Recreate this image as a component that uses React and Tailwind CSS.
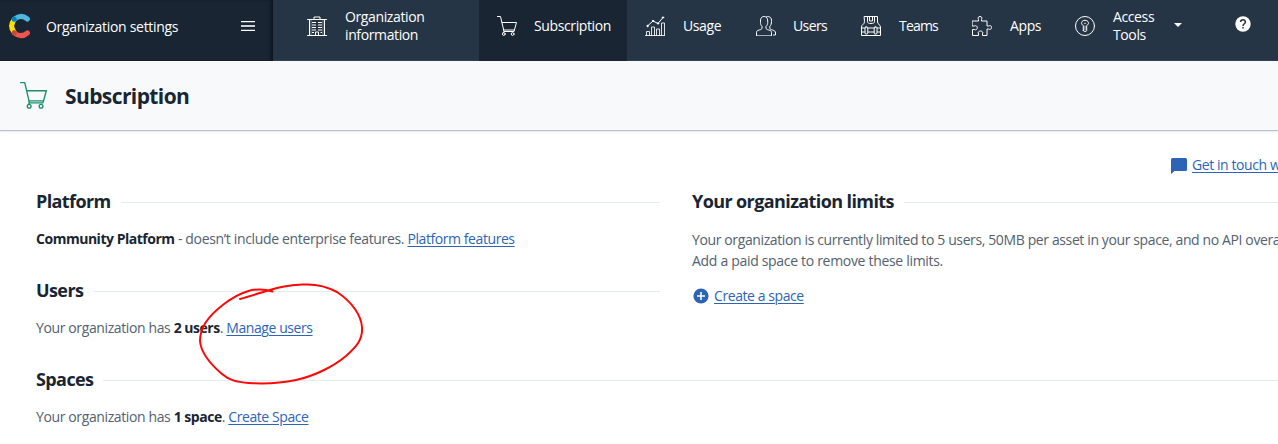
import React from "react";

function Icon({ className = "", size = 20, children }) {
  return (
    <svg
      width={size}
      height={size}
      viewBox="0 0 20 20"
      fill="none"
      stroke="currentColor"
      strokeWidth="1"
      strokeLinecap="round"
      strokeLinejoin="round"
      className={"shrink-0 " + className}
    >
      {children}
    </svg>
  );
}

const building = (
  <>
    <path d="M.5 3.5h19M.5 19.5h19M2.5 3.5v16M17.5 3.5v16M7 3V1h6v2M8.5 19v-3h3v3" />
    <path d="M4 4v15M16 4v15" opacity=".35" />
    <path d="M5 6.500h4M5 9h4M5 11.500h4M5 14h4M5 16.500h2M11 6.500h4M11 9h4M11 11.500h4M11 14h4M13.500 16.500h1.500" strokeLinecap="butt" />
  </>
);

const cart = (
  <>
    <path d="M.5.5h3L7 15.500h10L19.500 6.500H4.900M6.400 14h10.500" />
    <circle cx="6.800" cy="18" r="1.400" />
    <circle cx="15.600" cy="18" r="1.400" />
    <path d="M7 15.500l-.8 1.200" />
  </>
);

const chart = (
  <>
    <path d="M.5 19.500h19M1.500 19.500v-4h3v4M6.500 19.500v-8.500h3v8.500M11.500 19.500v-6.500h3v6.500M16.500 19.500V7h3v12.500" opacity=".85" />
    <path d="M2.500 10l5.500-5 5 2.500 5-6" />
    <g fill="currentColor">
      <circle cx="2.500" cy="10" r=".7" />
      <circle cx="8" cy="5" r=".7" />
      <circle cx="13" cy="7.500" r=".7" />
      <circle cx="18" cy="1.500" r=".7" />
    </g>
  </>
);

const people = (
  <>
    <path d="M.5 19.500v-3c0-1.700 1-2 2.800-2.500 1.700-.5 2.700-.8 2.700-2v-1.500C5 9.500 4.500 8 4.500 6.500 4.200 2.500 5.500.5 8 .5s4 2 3.700 6c0 1.500-.5 3-1.700 4v1.500c0 1.200 1 1.500 2.700 2 1.800.5 2.800.8 2.800 2.500v3z" />
    <path d="M10.500.8c3-1 5.300.7 5 4.700 0 2-.5 3.800-1.700 5v1.500c0 1.200 1 1.500 2.700 2 2 .7 3 1.200 3 3v2h-2" />
  </>
);

const vest = (
  <>
    <path d="M3.500.5h3v5c0 1.500 1 2 3.500 2s3.500-.5 3.500-2v-5h3v5.500c0 2.500 3 2.500 3 5v8.500H.5V11c0-2.500 3-2.500 3-5zM6.500.5h7M8.500 1v4h3V1" />
    <path d="M.5 12h3M7 12h6M16.500 12h3M.5 16h3M7 16h6M16.500 16h3" strokeWidth="1.500" opacity=".65" />
    <rect x="4" y="11" width="2.800" height="7" rx="1" />
    <rect x="13.200" y="11" width="2.800" height="7" rx="1" />
  </>
);

const puzzle = (
  <path d="M.5 5h6V3.500C5.500 1.500 6.500.5 8 .5s2.500 1 1.500 3V5h5.500v5h1.500c2-1 3 0 3 1.500s-1 2.500-3 1.500H15v6.500h-4.500V18c1-2-.5-3-2-3s-3 1-2 3v1.500h-6v-6h1.800c2 1 3-.5 3-1.800s-1-2.700-3-1.700H.5z" />
);

const keyhole = (
  <>
    <circle cx="10" cy="10" r="9.500" />
    <path d="M8.300 14.500V9.500C6.800 8.700 6.300 7.600 6.600 6.500 7 5 8.400 4.300 10 4.300s3 .7 3.400 2.200c.3 1.100-.2 2.200-1.700 3v5c0 1.500-3.400 1.500-3.400 0z" />
    <path d="M10 10v4M9.300 7.300h1.400" opacity=".7" />
  </>
);

function NavItem({ icon, className = "", textClass = "", children }) {
  return (
    <div className={"flex shrink-0 h-[61px] items-center pb-[9px] pl-[18px] gap-[18px] " + className}>
      <Icon>{icon}</Icon>
      <span className={"whitespace-nowrap leading-[18px] " + textClass}>{children}</span>
    </div>
  );
}

function Logo() {
  return (
    <svg width="22" height="26" viewBox="0 0 22 26" fill="none" strokeWidth="5" strokeLinecap="round" className="shrink-0">
      <path d="M5.300 6.500Q-.1 13 5.300 19.500" stroke="#ffe000" />
      <path d="M5.300 19.800Q12 25.500 18.400 20" stroke="#f0544f" />
      <path d="M5.300 6.200Q12 .5 18.400 6" stroke="#4fb5e1" />
      <circle cx="5.300" cy="6.300" r="2.500" fill="#0681b6" />
      <circle cx="5.300" cy="19.700" r="2.500" fill="#cd4739" />
    </svg>
  );
}

function Heading({ children, className = "" }) {
  return (
    <div className="flex h-[24px] items-center">
      <h2 className={"shrink-0 whitespace-nowrap pb-px text-[18px] font-bold leading-[23px] tracking-[-0.6px] text-[#192532] " + className}>{children}</h2>
      <div className="ml-[10px] h-px flex-1 bg-[#e5ebed]" />
    </div>
  );
}

function Strong({ children }) {
  return <b className="font-bold tracking-[-0.48px] text-[#192532]">{children}</b>;
}

function Link({ children, className = "" }) {
  return (
    <a href="#" className={"tracking-[-0.42px] text-[#2e64b6] underline decoration-1 underline-offset-2 " + className}>{children}</a>
  );
}

export default function App() {
  return (
    <div className="relative h-[444px] w-[1278px] overflow-hidden bg-white font-['Open_Sans','Noto_Sans',sans-serif] text-[14px] tracking-[-0.38px] text-[#536171]">
      <nav className="flex h-[61px] bg-[#263545] text-white">
        <div className="flex w-[273px] shrink-0 items-center bg-[#192532] pb-[9px] pl-[9px] shadow-[inset_-3px_0_3px_-1px_#0d151d]">
          <Logo />
          <span className="ml-[15px] w-[195px] whitespace-nowrap tracking-[-0.3px]">Organization settings</span>
          <svg width="14" height="10" viewBox="0 0 14 10">
            <path d="M0 0h14v1.300H0zM0 8.700h14V10H0z" fill="white" />
            <path d="M0 4h14v2H0z" fill="#d0d3d6" />
          </svg>
        </div>
        <NavItem icon={building} className="w-[206px] pl-[34px]">Organization<br />information</NavItem>
        <NavItem icon={cart} className="w-[148px] bg-[#192532]" textClass="-ml-px">Subscription</NavItem>
        <NavItem icon={chart} className="w-[111px]">Usage</NavItem>
        <NavItem icon={people} className="w-[105px]" textClass="-ml-px tracking-[-0.6px]">Users</NavItem>
        <NavItem icon={vest} className="w-[111px]" textClass="tracking-[-0.8px]">Teams</NavItem>
        <NavItem icon={puzzle} className="w-[103px]">Apps</NavItem>
        <NavItem icon={keyhole} className="w-[117px]">Access<br />Tools</NavItem>
        <div className="flex h-[50px] items-center">
          <svg width="8" height="4" viewBox="0 0 8 4" fill="currentColor"><path d="M0 0h8L4 4z" /></svg>
        </div>
        <div className="-mt-px ml-[53px] flex h-[50px] items-center">
          <svg width="16" height="16" viewBox="0 0 16 16">
            <circle cx="8" cy="8" r="7.700" fill="white" />
            <path d="M5.600 6.100C5.600 3 10.400 3 10.400 6.100 10.400 7.800 8 7.800 8 10" stroke="#263545" strokeWidth="1.500" fill="none" />
            <path d="M7.250 11h1.500v1.500h-1.500z" fill="#263545" />
          </svg>
        </div>
      </nav>
      <header className="flex h-[70px] items-center border-b border-[#b4c3ca] bg-[#f7f9fa] pl-5 shadow-[0_1px_2px_#e5ebed]">
        <Icon size={27} className="text-[#1c8f69]">{cart}</Icon>
        <h1 className="ml-[18px] pt-px text-[21px] font-bold leading-[28px] tracking-[-0.6px] text-[#192532]">Subscription</h1>
      </header>
      <main className="pl-9">
        <div className="flex h-[59px] items-start pl-[1135px] pt-[24px]">
          <svg width="16" height="16" viewBox="0 0 16 16" className="mt-[3px] shrink-0 text-[#2e64b6]"><path fill="currentColor" d="M1.500 0h13q1.500 0 1.500 1.500v10q0 1.500-1.500 1.500H3.500L0 16V1.500Q0 0 1.500 0z" /></svg>
          <Link className="ml-[5px] whitespace-nowrap leading-[20px]">Get in touch with us</Link>
        </div>
        <div className="grid w-[1280px] grid-cols-2 gap-x-8">
          <div>
            <Heading>Platform</Heading>
            <p className="mt-[15px] whitespace-nowrap leading-[20px] tracking-[-0.34px]"><Strong>Community Platform</Strong> - doesn’t include enterprise features. <Link>Platform features</Link></p>
            <div className="mt-[30px]"><Heading>Users</Heading></div>
            <p className="mt-[15px] whitespace-nowrap leading-[20px]">Your organization has <Strong>2 users</Strong>. <Link>Manage users</Link></p>
          </div>
          <div>
            <Heading>Your organization limits</Heading>
            <p className="mt-[15px] whitespace-nowrap leading-[21px]">Your organization is currently limited to 5 users, 50MB per asset in your space, and no API overages.<br /><span className="tracking-[-0.31px]">Add a paid space to remove these limits.</span></p>
            <div className="mt-[15px] flex items-center leading-[20px]">
              <svg width="18" height="18" viewBox="0 0 18 18" className="shrink-0"><circle cx="9" cy="9" r="7.600" fill="#2e64b6" /><path d="M9 5v8M5 9h8" stroke="white" strokeWidth="1.500" /></svg>
              <Link className="ml-1">Create a space</Link>
            </div>
          </div>
        </div>
        <div className="mt-[30px] w-[1280px]"><Heading>Spaces</Heading></div>
        <p className="mt-[15px] whitespace-nowrap leading-[20px]">Your organization has <Strong>1 space</Strong>. <Link>Create Space</Link></p>
      </main>
      <svg width="180" height="110" viewBox="190 280 180 110" fill="none" className="pointer-events-none absolute left-[190px] top-[280px]">
        <path d="M272.500 291.500C255 286 240 292 224 304C207 317 200 328 200 341C201 353 209 363 222 374C229 380 236 382 249 383C265 384 277 384 296 380C315 376 334 366 346 356C356 347 363 340 362 327C361 315 352 302 337 292C326 286 315 284 304 284.500C284 284 265 292 240 299" stroke="#fb0808" strokeWidth="2" strokeLinecap="round" strokeLinejoin="round" />
      </svg>
    </div>
  );
}
